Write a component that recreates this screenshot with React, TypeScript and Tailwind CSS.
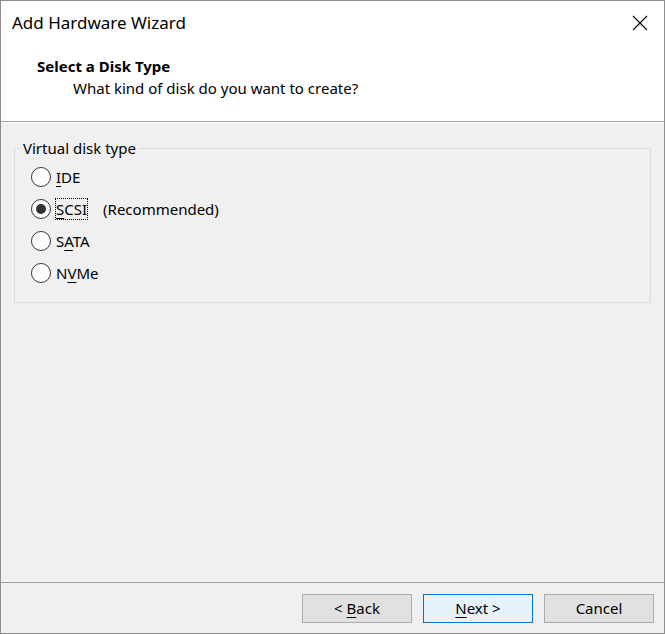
import React, { useState } from 'react'

const font = { fontFamily: '"Noto Sans", "Open Sans", sans-serif' }

const options = [
  { id: 'ide', pre: '', key: 'I', post: 'DE' },
  { id: 'scsi', pre: '', key: 'S', post: 'CSI' },
  { id: 'sata', pre: 'S', key: 'A', post: 'TA' },
  { id: 'nvme', pre: 'N', key: 'V', post: 'Me' },
]

const Radio = ({ checked }: { checked: boolean }) => (
  <span className="flex h-[20px] w-[20px] shrink-0 items-center justify-center rounded-full border border-[#333333] bg-white">
    {checked && <span className="h-[10px] w-[10px] rounded-full bg-[#333333]" />}
  </span>
)

const App = () => {
  const [value, setValue] = useState('scsi')

  return (
    <div
      style={font}
      className="flex h-[634px] w-[665px] flex-col border border-[#8e8e8e] bg-[#f0f0f0] text-[15px] text-black"
    >
      <header className="flex h-[121px] flex-col border-b border-[#a0a0a0] bg-white">
        <div className="flex h-[44px] items-center justify-between pl-[11px] pr-[16px]">
          <span className="text-[17px]">Add Hardware Wizard</span>
          <svg width="16" height="16" viewBox="0 0 16 16" className="text-black">
            <path d="M1 1 L15 15 M15 1 L1 15" stroke="currentColor" strokeWidth="1.1" />
          </svg>
        </div>
        <div className="pl-[36px] pt-[11px] font-bold leading-[20px]">Select a Disk Type</div>
        <div className="pl-[72px] leading-[24px]">What kind of disk do you want to create?</div>
      </header>
      <div className="h-px bg-white" />

      <main className="flex-1 px-[13px] pt-[16px]">
        <fieldset className="h-[164px] rounded-none border border-[#dcdcdc] px-[16px] pb-0 pt-[4px]">
          <legend className="ml-[-10px] px-[2px] leading-[18px]">Virtual disk type</legend>
          <div className="flex flex-col">
            {options.map((o) => (
              <label
                key={o.id}
                onClick={() => setValue(o.id)}
                className="flex h-[32px] cursor-default items-center gap-[4px]"
              >
                <Radio checked={value === o.id} />
                <span
                  className={
                    value === o.id
                      ? 'border border-dotted border-black leading-[20px]'
                      : 'border border-transparent leading-[20px]'
                  }
                >
                  {o.pre}
                  <span className="underline underline-offset-[3px]">{o.key}</span>
                  {o.post}
                </span>
                {o.id === 'scsi' && <span className="ml-[11px]">(Recommended)</span>}
              </label>
            ))}
          </div>
        </fieldset>
      </main>

      <footer className="flex h-[51px] items-start justify-end gap-[11px] border-t border-[#a0a0a0] pr-[10px] pt-[11px]">
        <button className="h-[29px] w-[110px] border border-[#adadad] bg-[#e1e1e1]">
          &lt; <span className="underline underline-offset-[3px]">B</span>ack
        </button>
        <button className="h-[29px] w-[110px] border border-[#0078d7] bg-[#e5f1fb]">
          <span className="underline underline-offset-[3px]">N</span>ext &gt;
        </button>
        <button className="h-[29px] w-[110px] border border-[#adadad] bg-[#e1e1e1]">Cancel</button>
      </footer>
    </div>
  )
}

export default App
